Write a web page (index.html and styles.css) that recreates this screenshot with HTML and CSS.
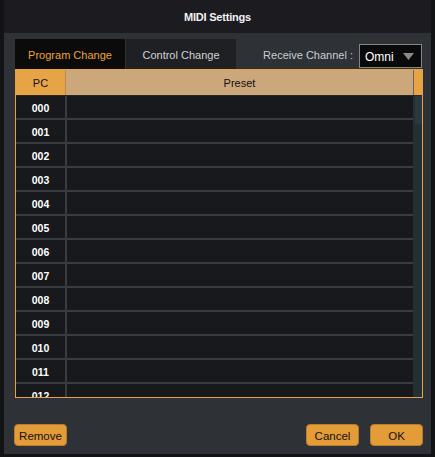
FILE: index.html
```html
<!DOCTYPE html>
<html>
<head>
<meta charset="utf-8">
<link rel="stylesheet" href="styles.css">
</head>
<body>
<div class="window">
  <div class="titlebar">MIDI Settings</div>
  <div class="content">
    <div class="topbar">
      <div class="tab active">Program Change</div>
      <div class="tab">Control Change</div>
      <div class="spacer"></div>
      <div class="recv">Receive Channel :</div>
      <div class="select"><span>Omni</span><svg class="caret" width="11" height="7" viewBox="0 0 11 7"><polygon points="0,0 11,0 5.5,7" fill="#8a8a8a"/></svg></div>
    </div>
    <div class="table">
      <div class="thead">
        <div class="th pc">PC</div>
        <div class="th preset">Preset</div>
        <div class="th sdiv"></div>
        <div class="th scorner"></div>
      </div>
      <div class="tbody">
        <div class="rows">
          <div class="row"><div class="num">000</div><div class="vsep"></div><div class="cell"></div></div>
          <div class="row"><div class="num">001</div><div class="vsep"></div><div class="cell"></div></div>
          <div class="row"><div class="num">002</div><div class="vsep"></div><div class="cell"></div></div>
          <div class="row"><div class="num">003</div><div class="vsep"></div><div class="cell"></div></div>
          <div class="row"><div class="num">004</div><div class="vsep"></div><div class="cell"></div></div>
          <div class="row"><div class="num">005</div><div class="vsep"></div><div class="cell"></div></div>
          <div class="row"><div class="num">006</div><div class="vsep"></div><div class="cell"></div></div>
          <div class="row"><div class="num">007</div><div class="vsep"></div><div class="cell"></div></div>
          <div class="row"><div class="num">008</div><div class="vsep"></div><div class="cell"></div></div>
          <div class="row"><div class="num">009</div><div class="vsep"></div><div class="cell"></div></div>
          <div class="row"><div class="num">010</div><div class="vsep"></div><div class="cell"></div></div>
          <div class="row"><div class="num">011</div><div class="vsep"></div><div class="cell"></div></div>
          <div class="row"><div class="num">012</div><div class="vsep"></div><div class="cell"></div></div>
        </div>
        <div class="scrollbar"><div class="thumb"></div></div>
      </div>
    </div>
    <div class="footer">
      <button class="btn remove">Remove</button>
      <div class="spacer"></div>
      <button class="btn cancel">Cancel</button>
      <button class="btn ok">OK</button>
    </div>
  </div>
</div>
</body>
</html>
```
FILE: styles.css
```css
html, body {
  margin: 0;
  padding: 0;
}
body {
  width: 435px;
  height: 457px;
  overflow: hidden;
  background: #121315;
  font-family: "Liberation Sans", Arial, sans-serif;
  font-size: 11px;
}
.window {
  margin-left: 4px;
  width: 427px;
  height: 454px;
  display: flex;
  flex-direction: column;
}
.titlebar {
  height: 33px;
  flex: none;
  background: #1c1c20;
  color: #f2f2f2;
  font-size: 11px;
  font-weight: bold;
  display: flex;
  align-items: center;
  justify-content: center;
  letter-spacing: -0.2px;
}
.content {
  flex: 1;
  background: #2e3136;
  padding: 6px 9px 0 11px;
  display: flex;
  flex-direction: column;
}
.topbar {
  height: 30px;
  display: flex;
  align-items: stretch;
}
.tab {
  width: 110px;
  display: flex;
  align-items: center;
  justify-content: center;
  padding-top: 2px;
  box-sizing: border-box;
  color: #cfd3d7;
  background: #1f2024;
}
.tab.active {
  background: #0b0b0c;
  color: #eba33c;
}
.tab + .tab {
  margin-left: 1px;
}
.spacer {
  flex: 1;
}
.recv {
  color: #c9cdd1;
  display: flex;
  align-items: center;
  padding-top: 2px;
  margin-right: 6px;
}
.select {
  align-self: flex-end;
  margin-bottom: 1px;
  width: 63px;
  height: 24px;
  box-sizing: border-box;
  border: 1px solid #7f8787;
  background: #0a0a0a;
  color: #ffffff;
  font-size: 12px;
  display: flex;
  align-items: center;
  padding: 1px 7px 0 5px;
}
.select span {
  flex: 1;
}
.caret {
  margin-top: -1px;
}
.table {
  width: 408px;
  box-sizing: border-box;
  border: 1px solid #e6a243;
  border-top: none;
  display: flex;
  flex-direction: column;
}
.thead {
  height: 25px;
  display: flex;
  border-bottom: 1px solid #2a2621;
  border-top: 1px solid #e6a243;
}
.th {
  display: flex;
  align-items: center;
  justify-content: center;
  color: #111;
}
.th.pc {
  width: 49px;
  background: #e6a445;
  border-right: 1px solid #b98a4c;
}
.th.preset {
  width: 347px;
  background: #cca77b;
}
.th.sdiv {
  width: 1px;
  background: #6c6456;
}
.th.scorner {
  width: 8px;
  background: #e6a445;
}
.tbody {
  height: 301px;
  display: flex;
  overflow: hidden;
}
.rows {
  width: 397px;
  display: flex;
  flex-direction: column;
}
.row {
  height: 22px;
  flex: none;
  display: flex;
  border-bottom: 2px solid #3a3b3f;
  background: #18191c;
}
.num {
  width: 49px;
  display: flex;
  align-items: center;
  justify-content: center;
  color: #ffffff;
  font-weight: bold;
  font-size: 10.5px;
  padding-top: 1px;
  box-sizing: border-box;
}
.vsep {
  width: 2px;
  background: #3a3b3f;
}
.cell {
  flex: 1;
}
.scrollbar {
  width: 9px;
  background: #243034;
  display: flex;
  flex-direction: column;
}
.thumb {
  margin-left: 2px;
  height: 28px;
  background: #2c383d;
}
.footer {
  display: flex;
  margin: 26px -1px 0 -1px;
}
.btn {
  height: 22px;
  width: 53px;
  box-sizing: border-box;
  border: 1px solid #b97d2d;
  border-radius: 4px;
  background: #e49c38;
  color: #111;
  font-family: "Liberation Sans", Arial, sans-serif;
  font-size: 11.5px;
  padding: 1px 0 0 0;
  display: flex;
  align-items: center;
  justify-content: center;
}
.btn.ok {
  margin-left: 11px;
}
```
